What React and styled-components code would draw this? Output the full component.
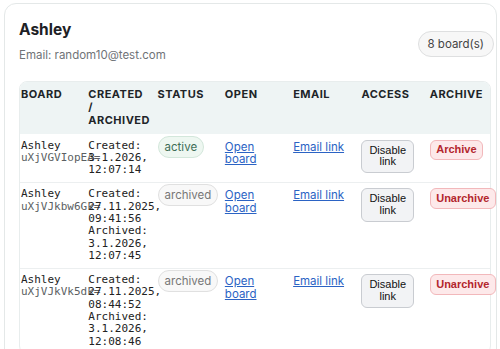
import React from 'react'
import styled, { createGlobalStyle } from 'styled-components'

const GlobalStyle = createGlobalStyle`
  html, body {
    margin: 0;
    padding: 0;
    background: #ffffff;
    overflow: hidden;
  }
  body {
    font-family: Inter, "Noto Sans", "Liberation Sans", sans-serif;
    color: #1f2327;
  }
`

const boards = [
  {
    id: 'uXjVGVIopEA=',
    status: 'active',
    created: ['3.1.2026,', '12:07:14'],
    archived: null,
  },
  {
    id: 'uXjVJkbw6Gk=',
    status: 'archived',
    created: ['27.11.2025,', '09:41:56'],
    archived: ['3.1.2026,', '12:07:45'],
  },
  {
    id: 'uXjVJkVk5dk=',
    status: 'archived',
    created: ['27.11.2025,', '08:44:52'],
    archived: ['3.1.2026,', '12:08:46'],
  },
]

const columns = [
  { label: ['BOARD'], width: 67 },
  { label: ['CREATED', '/', 'ARCHIVED'], width: 69 },
  { label: ['STATUS'], width: 67 },
  { label: ['OPEN'], width: 68 },
  { label: ['EMAIL'], width: 68 },
  { label: ['ACCESS'], width: 68 },
  { label: ['ARCHIVE'], width: 61 },
]

function App() {
  return (
    <>
      <GlobalStyle />
      <Card>
        <CardHeader>
          <div>
            <Title>Ashley</Title>
            <Email>Email: random10@test.com</Email>
          </div>
          <Pill>8 board(s)</Pill>
        </CardHeader>

        <TableWrap>
          <Table>
            <colgroup>
              {columns.map((c, i) => (
                <col key={i} style={{ width: c.width }} />
              ))}
            </colgroup>
            <thead>
              <tr>
                {columns.map((c, i) => (
                  <Th key={i}>
                    {c.label.map((l, j) => (
                      <div key={j}>{l}</div>
                    ))}
                  </Th>
                ))}
              </tr>
            </thead>
            <tbody>
              {boards.map((b) => (
                <Row key={b.id}>
                  <Td>
                    <Mono>Ashley</Mono>
                    <Mono $muted>{b.id}</Mono>
                  </Td>
                  <Td>
                    <Mono>Created:</Mono>
                    {b.created.map((l) => (
                      <Mono key={l}>{l}</Mono>
                    ))}
                    {b.archived && (
                      <>
                        <Mono>Archived:</Mono>
                        {b.archived.map((l) => (
                          <Mono key={l}>{l}</Mono>
                        ))}
                      </>
                    )}
                  </Td>
                  <Td>
                    <Status $active={b.status === 'active'}>{b.status}</Status>
                  </Td>
                  <Td>
                    <Link href="#" $narrow>Open board</Link>
                  </Td>
                  <Td>
                    <Link href="#">Email link</Link>
                  </Td>
                  <Td>
                    <Button>Disable<br />link</Button>
                  </Td>
                  <Td>
                    <Button $danger>
                      {b.status === 'active' ? 'Archive' : 'Unarchive'}
                    </Button>
                  </Td>
                </Row>
              ))}
            </tbody>
          </Table>
        </TableWrap>
      </Card>
    </>
  )
}

export default App

const Card = styled.div`
  box-sizing: border-box;
  width: 493px;
  margin: 3px 0 0 4px;
  padding: 16px 2px 20px 14px;
  border: 1px solid #e4e8e8;
  border-radius: 12px;
  background: #fff;
`

const CardHeader = styled.div`
  display: flex;
  justify-content: space-between;
  align-items: center;
`

const Title = styled.h1`
  margin: 0;
  font-size: 15.5px;
  line-height: 19px;
  font-weight: 700;
  color: #1d2125;
`

const Email = styled.div`
  margin-top: 9px;
  font-size: 11.5px;
  line-height: 15px;
  color: #6f7377;
`

const Pill = styled.span`
  margin-top: 4px;
  padding: 5px 9px;
  border: 1px solid #dedfe0;
  border-radius: 999px;
  background: #f7f7f7;
  font-size: 11.5px;
  line-height: 14px;
  color: #444;
`

const TableWrap = styled.div`
  width: 470px;
  margin-top: 18px;
  border: 1px solid #e8eded;
  border-radius: 8px;
`

const Table = styled.table`
  width: 100%;
  table-layout: fixed;
  border-collapse: collapse;
`

const Th = styled.th`
  padding: 6px 2px 7px 1px;
  background: #eef4f4;
  text-align: left;
  vertical-align: top;
  font-size: 11px;
  line-height: 13px;
  font-weight: 700;
  letter-spacing: 0.5px;
  color: #202428;
  &:first-child { border-top-left-radius: 7px; }
  &:last-child { border-top-right-radius: 7px; }
`

const Row = styled.tr`
  & + & td { border-top: 1px solid #eceff0; }
`

const Td = styled.td`
  padding: 5.5px 2px 5.5px 1px;
  vertical-align: top;
  overflow: visible;
  font-size: 11px;
  line-height: 12px;
`

const Mono = styled.div`
  font-family: "DejaVu Sans Mono", "Liberation Mono", monospace;
  font-size: 11px;
  line-height: 12.3px;
  white-space: nowrap;
  color: ${(p) => (p.$muted ? '#5b5f63' : '#222')};
`

const Status = styled.span`
  display: block;
  width: fit-content;
  margin-top: -4px;
  padding: 3px 6px;
  border-radius: 999px;
  font-size: 11.5px;
  line-height: 14px;
  border: 1px solid ${(p) => (p.$active ? '#d3e7db' : '#e0e0e0')};
  background: ${(p) => (p.$active ? '#eef7f1' : '#f8f8f8')};
  color: ${(p) => (p.$active ? '#3f6e57' : '#777')};
`

const Link = styled.a`
  display: block;
  width: fit-content;
  max-width: ${(p) => (p.$narrow ? '36px' : 'none')};
  padding-top: 1px;
  font-size: 11.5px;
  line-height: 12.7px;
  color: #2b63c4;
  text-decoration: underline;
`

const Button = styled.button`
  display: block;
  padding: ${(p) => (p.$danger ? '3.5px 5.5px' : '4px 7px')};
  border-radius: 6px;
  font-family: "Liberation Sans", Arial, sans-serif;
  font-size: 11px;
  line-height: 11.7px;
  font-weight: ${(p) => (p.$danger ? 700 : 400)};
  white-space: nowrap;
  border: 1px solid ${(p) => (p.$danger ? '#f2b8bb' : '#c9ccd1')};
  background: ${(p) => (p.$danger ? '#fde9ea' : '#f2f3f5')};
  color: ${(p) => (p.$danger ? '#b3262d' : '#111')};
`
